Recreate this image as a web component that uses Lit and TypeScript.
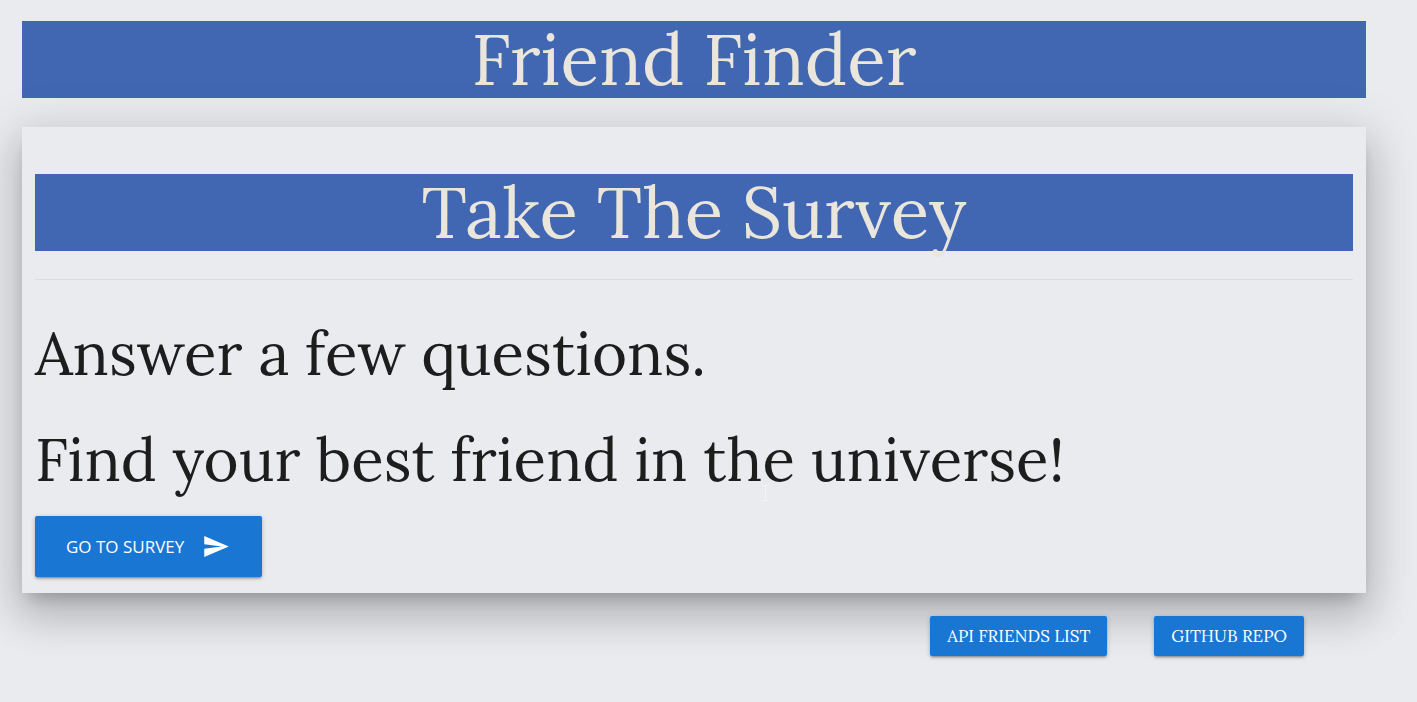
import { LitElement, html, css } from "lit";
import { customElement } from "lit/decorators.js";

@customElement("app-root")
export class AppRoot extends LitElement {
  static styles = css`
    :host {
      display: block;
      box-sizing: border-box;
      min-height: 100vh;
      padding: 21px 51px 46px 22px;
      overflow: hidden;
      background: #e9ebee;
      color: #1d1d1d;
      font-family: Lora, "Liberation Serif", serif;
    }
    .banner {
      margin: 0;
      background: #4267b2;
      color: #ebe6dc;
      font-size: 71px;
      font-weight: 400;
      line-height: 77px;
      text-align: center;
    }
    .panel {
      position: relative;
      margin-top: 29px;
      padding: 47px 13px 16px;
      background: #e9ebee;
      box-shadow: 0 24px 38px 3px rgba(0, 0, 0, 0.14), 0 9px 46px 8px rgba(0, 0, 0, 0.12),
        0 11px 15px -7px rgba(0, 0, 0, 0.2);
    }
    .rule {
      height: 1px;
      margin: 28px 0 35px;
      border: 0;
      background: #dcdee1;
    }
    .lead {
      margin: 0 0 30px;
      font-size: 60px;
      font-weight: 400;
      line-height: 76px;
    }
    .lead.last {
      margin-bottom: 19px;
    }
    .caret {
      position: absolute;
      left: 740px;
      top: 358px;
    }
    button {
      display: inline-flex;
      align-items: center;
      border: 0;
      border-radius: 2px;
      background: #1976d2;
      color: #fff;
      cursor: pointer;
      box-shadow: 0 2px 2px 0 rgba(0, 0, 0, 0.14), 0 3px 1px -2px rgba(0, 0, 0, 0.12),
        0 1px 5px 0 rgba(0, 0, 0, 0.2);
    }
    .go {
      gap: 20px;
      height: 61px;
      padding: 0 33px 0 31px;
      font: 17px "Open Sans", sans-serif;
    }
    .small {
      height: 40px;
      padding: 0 17px;
      font: 17px Lora, "Liberation Serif", serif;
    }
    .links {
      position: relative;
      display: flex;
      justify-content: flex-end;
      gap: 47px;
      margin-top: 23px;
      padding-right: 62px;
    }
  `;

  render() {
    return html`
      <h1 class="banner">Friend Finder</h1>
      <main class="panel">
        <h2 class="banner">Take The Survey</h2>
        <hr class="rule" />
        <h3 class="lead">Answer a few questions.</h3>
        <h3 class="lead last">Find your best friend in the universe!</h3>
        <button class="go" type="button">
          GO TO SURVEY
          <svg width="25" height="21" viewBox="2 3 21 18" fill="currentColor" aria-hidden="true">
            <path d="M2.01 21L23 12 2.01 3 2 10l15 2-15 2z" />
          </svg>
        </button>
        <svg class="caret" width="7" height="16" viewBox="0 0 7 16" fill="none" stroke="#f3f4f5" aria-hidden="true">
          <path d="M0 .5h3M4 .5h3M3.500 1v14M0 15.500h3M4 15.500h3" />
        </svg>
      </main>
      <footer class="links">
        <button class="small" type="button">API FRIENDS LIST</button>
        <button class="small" type="button">GITHUB REPO</button>
      </footer>
    `;
  }
}
